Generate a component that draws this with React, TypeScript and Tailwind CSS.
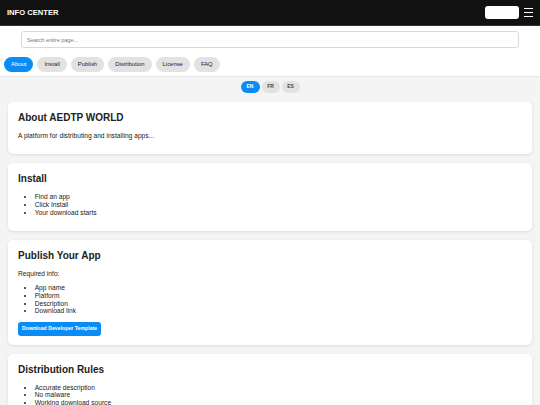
import { useState } from "react";

const tabs = ["About", "Install", "Publish", "Distribution", "License", "FAQ"];
const langs = ["EN", "FR", "ES"];

export default function App() {
    const [tab, setTab] = useState("About");
    const [lang, setLang] = useState("EN");

    return (
        <div className="min-h-[405px] bg-[#f4f4f4] text-[#222] font-['Liberation_Sans',Arial,sans-serif]">
            <header className="h-[26px] bg-[#111] flex items-center justify-between pl-[7px] pr-[7px] border-b border-[#333]">
                <div className="text-white font-bold text-[7.6px]">INFO CENTER</div>
                <div className="flex items-center gap-[5px]">
                    <div className="w-[34px] h-[13px] bg-white rounded-[3px]" />
                    <div className="flex flex-col gap-[2.5px] w-[9px]">
                        <span className="block h-[1.2px] bg-white" />
                        <span className="block h-[1.2px] bg-white" />
                        <span className="block h-[1.2px] bg-white" />
                    </div>
                </div>
            </header>

            <div className="bg-white border-b border-[#e6e6e6] pt-[5px] pb-[4px]">
                <div className="px-[21px]">
                    <input
                        className="block w-full h-[17px] border border-[#d9d9d9] rounded-[3px] px-[5px] text-[5.5px] outline-none placeholder:text-[#777]"
                        placeholder="Search entire page..."
                    />
                </div>
                <nav className="flex gap-[4px] px-[4px] mt-[9px]">
                    {tabs.map((t) => (
                        <button
                            key={t}
                            onClick={() => setTab(t)}
                            className={
                                t === tab
                                    ? "h-[15px] px-[7px] rounded-full bg-[#0a8cf5] text-white text-[5.9px]"
                                    : "h-[15px] px-[7px] rounded-full bg-[#e2e2e2] text-[#222] text-[5.9px]"
                            }
                        >
                            {t}
                        </button>
                    ))}
                </nav>
            </div>

            <div className="flex justify-center gap-[2px] mt-[4px]">
                {langs.map((l) => (
                    <button
                        key={l}
                        onClick={() => setLang(l)}
                        className={
                            l === lang
                                ? "h-[12px] w-[19px] rounded-full bg-[#0a8cf5] text-white text-[5px] font-semibold"
                                : "h-[12px] w-[18px] rounded-full bg-[#e2e2e2] text-[#444] text-[5px] font-semibold"
                        }
                    >
                        {l}
                    </button>
                ))}
            </div>

            <main className="flex flex-col gap-[9px] px-[8px] mt-[9px] text-[6.67px] leading-[1.15]">
                <section className="bg-white rounded-[5px] shadow-[0_1px_3px_rgba(0,0,0,0.1)] px-[10px] pt-[10px] pb-[9px]">
                    <h2 className="text-[10px] font-bold mb-[8.3px]">About AEDTP WORLD</h2>
                    <p className="mb-[6px]">A platform for distributing and installing apps...</p>
                </section>

                <section className="bg-white rounded-[5px] shadow-[0_1px_3px_rgba(0,0,0,0.1)] px-[10px] pt-[10px] pb-[9px]">
                    <h2 className="text-[10px] font-bold mb-[8.3px]">Install</h2>
                    <ul className="list-disc pl-[16.67px] mb-[6px]">
                        <li>Find an app</li>
                        <li>Click Install</li>
                        <li>Your download starts</li>
                    </ul>
                </section>

                <section className="bg-white rounded-[5px] shadow-[0_1px_3px_rgba(0,0,0,0.1)] px-[10px] pt-[10px] pb-[9px]">
                    <h2 className="text-[10px] font-bold mb-[8.3px]">Publish Your App</h2>
                    <p className="mb-[6.67px]">Required info:</p>
                    <ul className="list-disc pl-[16.67px] mb-[6.67px]">
                        <li>App name</li>
                        <li>Platform</li>
                        <li>Description</li>
                        <li>Download link</li>
                    </ul>
                    <button className="block h-[14px] px-[4px] rounded-[3px] bg-[#0a8cf5] text-white text-[5.2px] font-semibold">
                        Download Developer Template
                    </button>
                </section>

                <section className="bg-white rounded-[5px] shadow-[0_1px_3px_rgba(0,0,0,0.1)] px-[10px] pt-[10px] pb-[9px]">
                    <h2 className="text-[10px] font-bold mb-[8.3px]">Distribution Rules</h2>
                    <ul className="list-disc pl-[16.67px] mb-[6px]">
                        <li>Accurate description</li>
                        <li>No malware</li>
                        <li>Working download source</li>
                    </ul>
                </section>
            </main>
        </div>
    );
}
